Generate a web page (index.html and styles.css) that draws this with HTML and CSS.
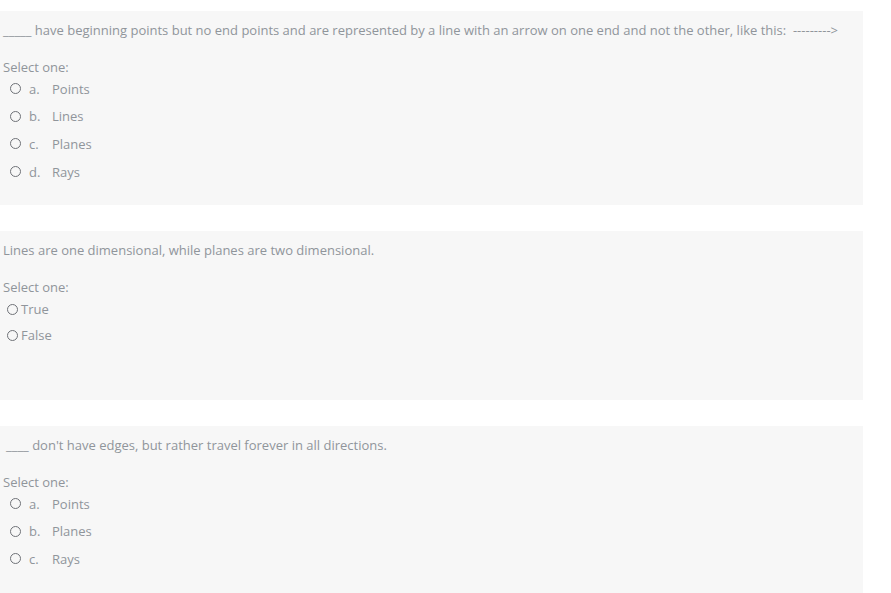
FILE: index.html
```html
<!DOCTYPE html>
<html>
<head>
<meta charset="utf-8">
<link rel="stylesheet" href="styles.css">
</head>
<body>
<div class="page">
  <section class="card card1">
    <p class="qtext">_____ have beginning points but no end points and are represented by a line with an arrow on one end and not the other, like this:&nbsp; ---------&gt;</p>
    <p class="prompt">Select one:</p>
    <ul class="answers">
      <li class="opt"><span class="radio"></span><span class="letter">a.</span><span class="label">Points</span></li>
      <li class="opt"><span class="radio"></span><span class="letter">b.</span><span class="label">Lines</span></li>
      <li class="opt"><span class="radio"></span><span class="letter">c.</span><span class="label">Planes</span></li>
      <li class="opt"><span class="radio"></span><span class="letter">d.</span><span class="label">Rays</span></li>
    </ul>
  </section>
  <section class="card card2">
    <p class="qtext">Lines are one dimensional, while planes are two dimensional.</p>
    <p class="prompt">Select one:</p>
    <ul class="answers tf">
      <li class="opt"><span class="radio"></span><span class="label">True</span></li>
      <li class="opt"><span class="radio"></span><span class="label">False</span></li>
    </ul>
  </section>
  <section class="card card3">
    <p class="qtext indent">____ don't have edges, but rather travel forever in all directions.</p>
    <p class="prompt">Select one:</p>
    <ul class="answers">
      <li class="opt"><span class="radio"></span><span class="letter">a.</span><span class="label">Points</span></li>
      <li class="opt"><span class="radio"></span><span class="letter">b.</span><span class="label">Planes</span></li>
      <li class="opt"><span class="radio"></span><span class="letter">c.</span><span class="label">Rays</span></li>
    </ul>
  </section>
</div>
</body>
</html>
```

FILE: styles.css
```css
html, body {
  margin: 0;
  padding: 0;
  background: #ffffff;
}
body {
  font-family: "Open Sans", "Liberation Sans", sans-serif;
  font-size: 13px;
  color: #90959b;
}
.page {
  padding-top: 11px;
  width: 863px;
  display: flex;
  flex-direction: column;
  gap: 26px;
}
.card {
  background: #f7f7f7;
  padding: 10px 3px 0 3px;
  box-sizing: border-box;
}
.card1 { height: 194px; }
.card2 { height: 169px; }
.card3 { height: 180px; }
p { margin: 0; }
.qtext {
  line-height: 18px;
}
.qtext.indent { padding-left: 3px; }
.prompt {
  margin-top: 19px;
  line-height: 18px;
}
.answers {
  list-style: none;
  margin: 0;
  padding: 0;
  margin-top: -1px;
}
.opt {
  display: flex;
  align-items: center;
  height: 27.6px;
  padding-left: 7px;
}
.radio {
  width: 9px;
  height: 9px;
  border: 1.3px solid #6f7277;
  border-radius: 50%;
  flex: none;
}
.letter {
  margin-left: 8px;
  width: 23px;
}
.tf {
  margin-top: 0;
}
.tf .opt {
  height: 26px;
  padding-left: 4px;
}
.tf .label {
  margin-left: 3px;
}
```
